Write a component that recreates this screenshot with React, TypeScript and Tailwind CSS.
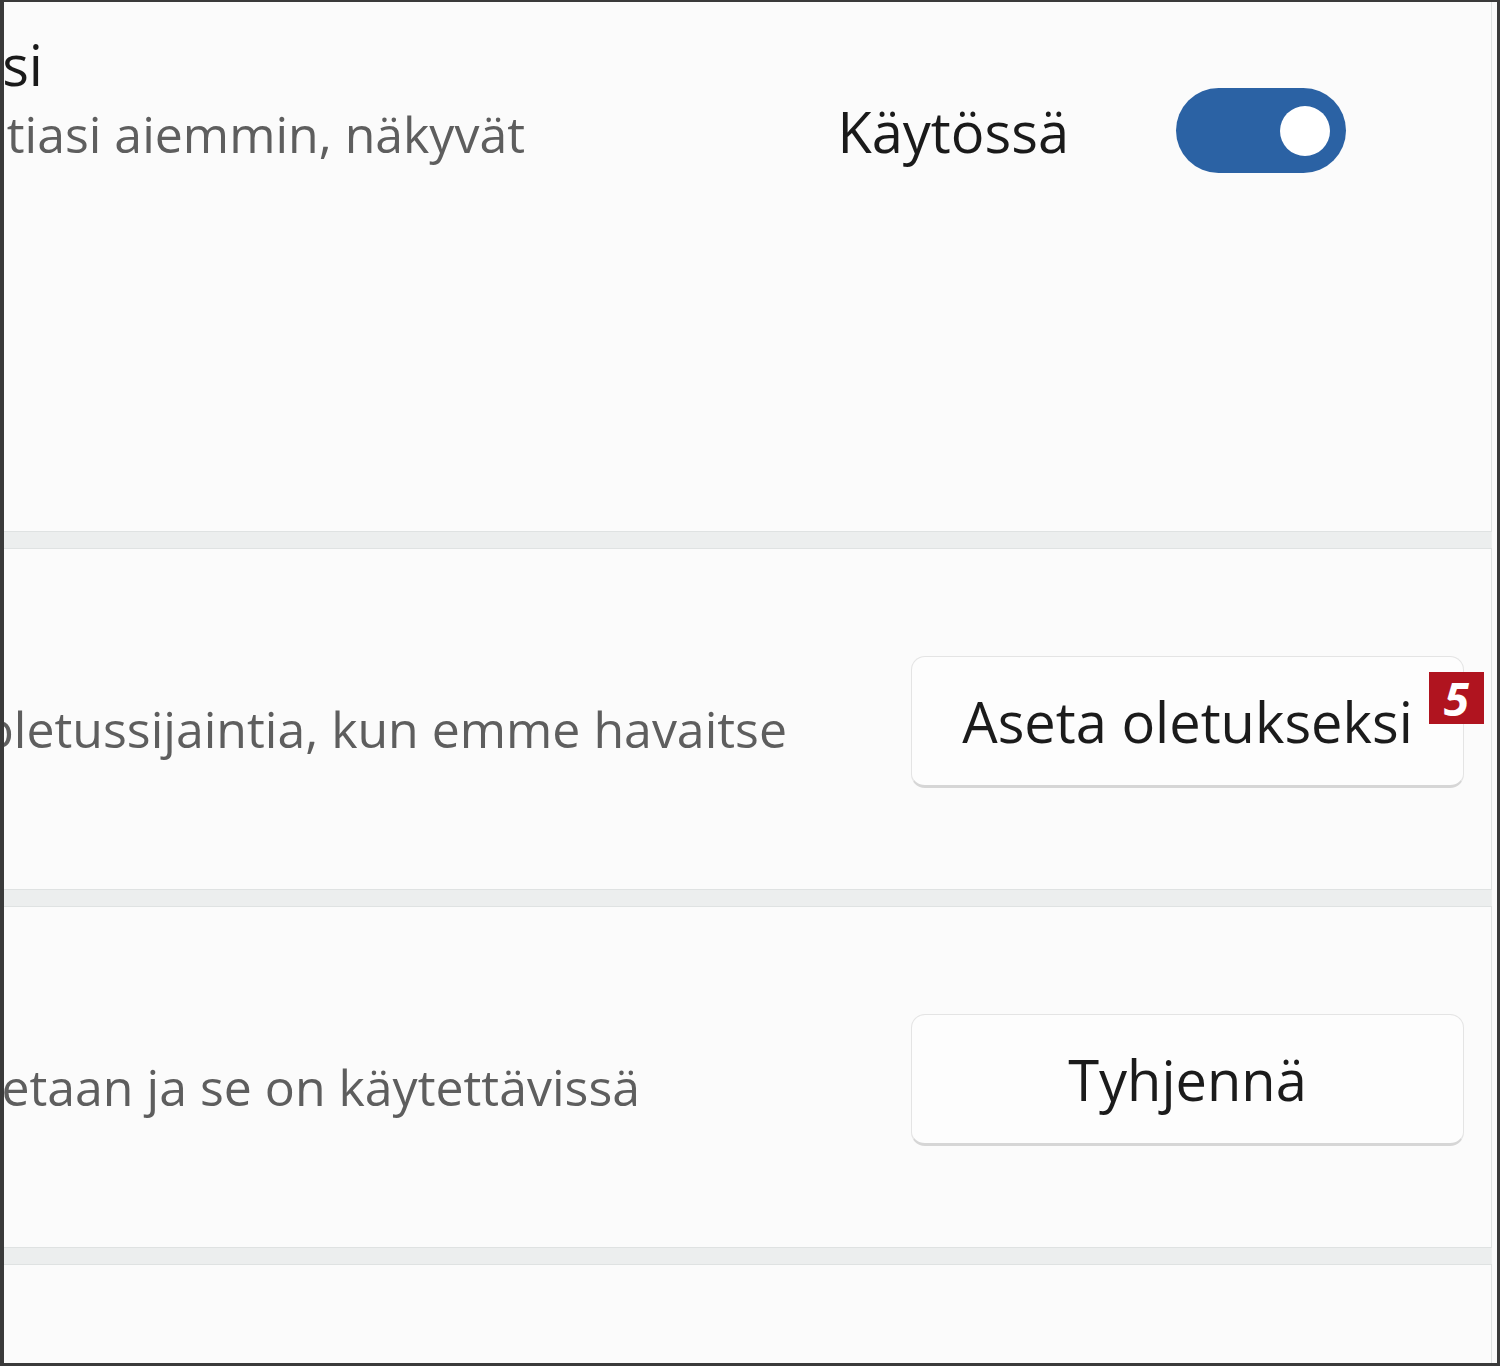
import React from "react";

function Toggle({ on }: { on: boolean }) {
    return (
        <div
            className={`flex h-[85px] w-[170px] items-center rounded-full px-[16px] ${
                on ? "justify-end bg-[#2b62a4]" : "justify-start border-4 border-[#5f5f5f] bg-transparent"
            }`}
        >
            <div className="h-[50px] w-[50px] rounded-full bg-white" />
        </div>
    );
}

function SettingButton({ label, badge }: { label: string; badge?: string }) {
    return (
        <div className="relative">
            <button
                type="button"
                className="flex h-[132px] w-[553px] items-center justify-center rounded-[14px] border border-b-[3px] border-[#e4e4e4] border-b-[#d6d6d6] bg-[#fdfdfd] text-[56px] text-[#1b1b1b]"
            >
                {label}
            </button>
            {badge && (
                <span className="absolute -right-[20px] top-[16px] flex h-[52px] w-[55px] items-center justify-center bg-[#b0141f] text-[46px] font-bold italic leading-none text-white">
                    {badge}
                </span>
            )}
        </div>
    );
}

export default function App() {
    return (
        <div className="h-[1366px] w-[1500px] overflow-hidden border-b-[3px] border-l-4 border-r-[3px] border-t-2 border-[#3a3a3a] bg-[#fafafa] pr-[5px] font-['Open_Sans','Noto_Sans',sans-serif]">
            <div className="flex h-full flex-col gap-4 bg-[#eceeee]">
                <section className="flex h-[530px] shrink-0 items-start border-b border-r border-[#dfe2e2] bg-[#fbfbfb]">
                    <div className="flex-1 pt-[30px]">
                        <div className="flex w-[39px] justify-end whitespace-nowrap text-[56px] leading-[64px] text-[#1a1a1a]">
                            Salli sovellusten käyttää sijaintiasi
                        </div>
                        <div className="mt-[8px] flex w-[521px] justify-end whitespace-nowrap text-[50px] leading-[60px] text-[#5e5e5e]">
                            Sovellukset, jotka ovat pyytäneet sijaintiasi aiemmin, näkyvät
                        </div>
                    </div>
                    <div className="mr-[145px] mt-[86px] flex items-center gap-[107px]">
                        <span className="text-[56px] text-[#1a1a1a]">Käytössä</span>
                        <Toggle on />
                    </div>
                </section>

                <section className="flex h-[342px] shrink-0 items-center border-y border-r border-[#dfe2e2] bg-[#fbfbfb]">
                    <div className="flex-1 pt-[20px]">
                        <div className="flex w-[783px] justify-end whitespace-nowrap text-[50px] leading-[60px] text-[#5e5e5e]">
                            Windows, sovellukset ja palvelut voivat käyttää oletussijaintia, kun emme havaitse
                        </div>
                    </div>
                    <div className="mr-[27px] mt-[6px]">
                        <SettingButton label="Aseta oletukseksi" badge="5" />
                    </div>
                </section>

                <section className="flex h-[342px] shrink-0 items-center border-y border-r border-[#dfe2e2] bg-[#fbfbfb]">
                    <div className="flex-1 pt-[20px]">
                        <div className="flex w-[636px] justify-end whitespace-nowrap text-[50px] leading-[60px] text-[#5e5e5e]">
                            Sijaintihistoria tallennetaan ja se on käytettävissä
                        </div>
                    </div>
                    <div className="mr-[27px] mt-[6px]">
                        <SettingButton label="Tyhjennä" />
                    </div>
                </section>

                <section className="flex-1 border-t border-r border-[#dfe2e2] bg-[#fbfbfb]" />
            </div>
        </div>
    );
}
